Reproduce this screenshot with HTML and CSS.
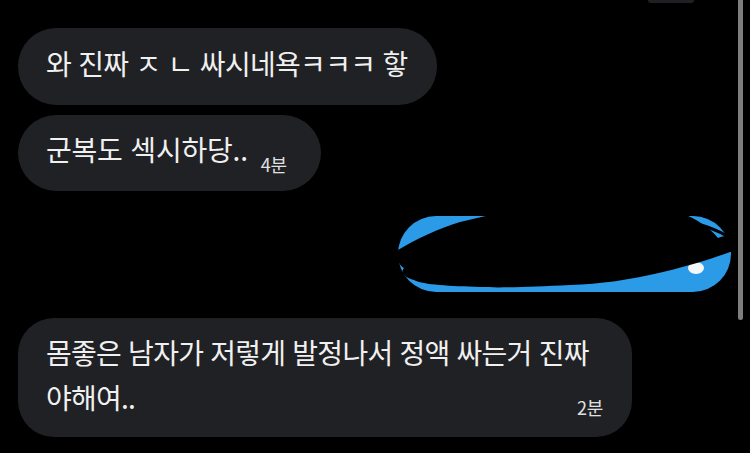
FILE: index.html
```html
<!DOCTYPE html>
<html lang="ko">
<head>
<meta charset="utf-8">
<title>Chat</title>
<link rel="stylesheet" href="styles.css">
</head>
<body>
<div class="chat">
  <div class="prev-sliver"></div>
  <div class="bubble bubble-short bubble-first">
    <p class="msg msg-first">와 진짜 ㅈ ㄴ 싸시네욕ㅋㅋㅋ 핳</p>
  </div>
  <div class="bubble bubble-short bubble-second">
    <p class="msg msg-second">군복도 섹시하당..</p>
    <span class="time time-inline">4분</span>
  </div>
  <div class="sent-row">
    <div class="bubble-sent"></div>
    <svg class="scribble" viewBox="0 0 370 120" width="370" height="120" aria-hidden="true">
      <ellipse cx="316" cy="78" rx="8" ry="6" fill="#f4f8fb"/>
      <path d="M80 54 L92 46" stroke="#cfe7fa" stroke-width="3" stroke-linecap="round"/>
      <path d="M18 60 C34 50 60 38 80 32 L110 25 L300 23 C316 28 330 38 338 48 C348 44 360 44 364 50 C366 58 358 63 350 62 C334 68 312 75 283 82 C250 90 220 94 190 95 C150 97 120 98 100 97 C70 96 44 95 34 90 C24 87 20 83 24 78 C18 74 16 68 18 60 Z" fill="#000"/>
      <path d="M22 70 C40 60 70 54 98 56" stroke="#000" stroke-width="7" fill="none" stroke-linecap="round"/>
      <path d="M296 30 C318 32 338 40 354 50" stroke="#000" stroke-width="3" fill="none"/>
    </svg>
  </div>
  <div class="bubble bubble-long">
    <p class="msg msg-long">몸좋은 남자가 저렇게 발정나서 정액 싸는거 진짜</p>
    <div class="last-line">
      <span class="msg msg-long">야해여..</span>
      <span class="time">2분</span>
    </div>
  </div>
</div>
<div class="scrollbar"></div>
</body>
</html>
```

FILE: styles.css
```css
* { box-sizing: border-box; }

html, body {
  margin: 0;
  padding: 0;
  background: #000;
  width: 750px;
  height: 453px;
  overflow: hidden;
}

body {
  font-family: "Noto Sans CJK KR", "Noto Sans", sans-serif;
  color: #f0f0f0;
  position: relative;
}

.chat {
  display: flex;
  flex-direction: column;
  align-items: flex-start;
}

.prev-sliver {
  width: 46px;
  height: 3px;
  margin-left: 648px;
  background: #1f2023;
  border-radius: 0 0 20px 20px;
}

.bubble {
  background: #202124;
  margin-left: 18px;
  display: flex;
}

.bubble-short {
  height: 77px;
  border-radius: 38px;
  align-items: center;
  padding: 0 28px 8px 28px;
}

.bubble-first {
  margin-top: 25px;
  width: 419px;
}

.bubble-second {
  margin-top: 10px;
  width: 303px;
  height: 76px;
}

.msg {
  margin: 0;
  font-size: 28px;
  line-height: 32px;
  white-space: nowrap;
}

.msg-first {
  letter-spacing: -0.7px;
}

.msg-second {
  letter-spacing: -0.2px;
}

.msg-long {
  letter-spacing: -0.75px;
  line-height: 45px;
}

.time {
  font-size: 18px;
  line-height: 20px;
  color: #e0e0e0;
  letter-spacing: -0.3px;
}

.time-inline {
  align-self: flex-end;
  margin-left: 13px;
  margin-bottom: 9px;
}

.sent-row {
  position: relative;
  margin-top: 25px;
  width: 750px;
  height: 76px;
  display: flex;
  justify-content: flex-end;
}

.bubble-sent {
  width: 333px;
  height: 76px;
  margin-right: 19px;
  background: #2b9be8;
  border-radius: 38px;
}

.scribble {
  position: absolute;
  left: 380px;
  top: -26px;
}

.bubble-long {
  margin-top: 26px;
  width: 614px;
  height: 119px;
  border-radius: 36px;
  flex-direction: column;
  padding: 12px 29px 0 28px;
}

.last-line {
  display: flex;
  justify-content: space-between;
  align-items: flex-end;
}

.last-line .time {
  margin-bottom: 3px;
}

.scrollbar {
  position: absolute;
  left: 738px;
  top: 0;
  width: 5px;
  height: 320px;
  background: #7e7e7e;
  border-radius: 0 0 3px 3px;
}
```
